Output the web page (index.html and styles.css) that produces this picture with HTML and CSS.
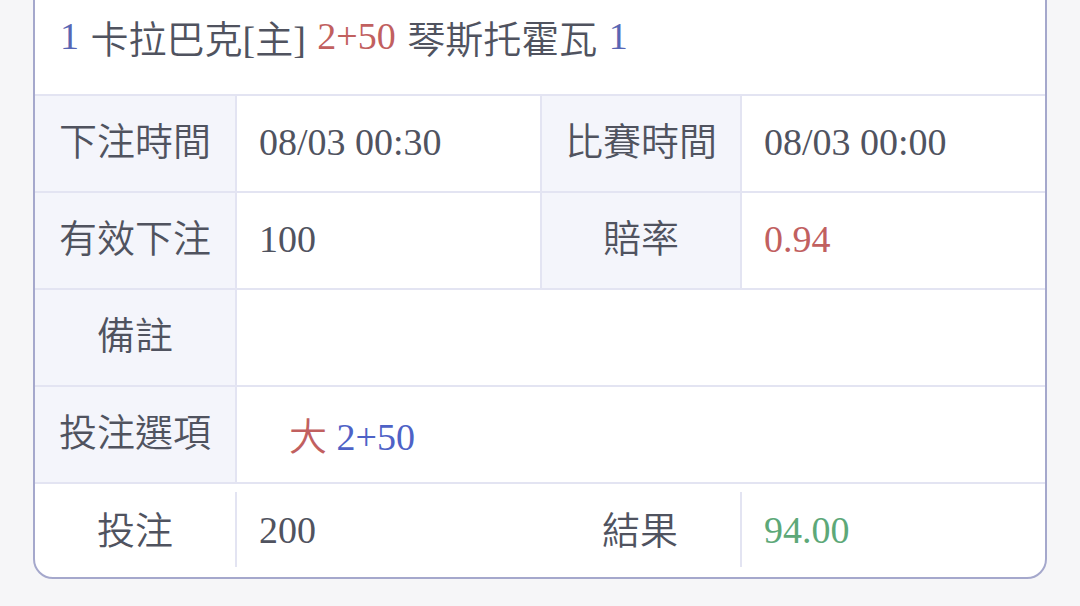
FILE: index.html
```html
<!DOCTYPE html>
<html lang="zh-Hant">
<head>
<meta charset="utf-8">
<title>注單</title>
<link rel="stylesheet" href="styles.css">
</head>
<body>
<div class="page">
  <div class="card">
    <div class="head">
      <span class="blue">1</span>&nbsp;卡拉巴克[主]&nbsp;<span class="red">2+50</span>&nbsp;琴斯托霍瓦&nbsp;<span class="blue">1</span>
    </div>
    <div class="row">
      <div class="lbl w1">下注時間</div>
      <div class="val w2">08/03 00:30</div>
      <div class="lbl w3">比賽時間</div>
      <div class="val w4 last">08/03 00:00</div>
    </div>
    <div class="row">
      <div class="lbl w1">有效下注</div>
      <div class="val w2">100</div>
      <div class="lbl w3">賠率</div>
      <div class="val w4 last red">0.94</div>
    </div>
    <div class="row">
      <div class="lbl w1">備註</div>
      <div class="val grow last"></div>
    </div>
    <div class="row">
      <div class="lbl w1">投注選項</div>
      <div class="val grow last"><span class="pick"><span class="red">大</span> <span class="blue2">2+50</span></span></div>
    </div>
    <div class="row foot">
      <div class="lbl w1 plain">投注</div>
      <div class="sep"></div>
      <div class="val w2 plain">200</div>
      <div class="lbl w3 plain">結果</div>
      <div class="sep"></div>
      <div class="val w4 plain last green">94.00</div>
    </div>
  </div>
</div>
</body>
</html>
```

FILE: styles.css
```css
html, body {
  margin: 0;
  padding: 0;
  background: #f6f6f8;
}
body {
  width: 1080px;
  height: 606px;
  overflow: hidden;
  font-family: "Liberation Serif", "Noto Sans CJK TC", serif;
  font-weight: 350;
  color: #50535f;
  font-size: 38px;
}
.page {
  padding: 0 33px;
}
.card {
  margin-top: -20px;
  background: #ffffff;
  border: 2px solid #a5a8cc;
  border-radius: 20px;
  overflow: hidden;
}
.head {
  height: 112px;
  display: flex;
  align-items: center;
  padding: 0 0 4px 25px;
  box-sizing: border-box;
  white-space: nowrap;
  word-spacing: 2px;
}
.blue { color: #5866b4; }
.blue2 { color: #4e62c6; }
.red { color: #c1605f; }
.green { color: #5da878; }
.row {
  display: flex;
  height: 97px;
  border-top: 2px solid #e3e4f2;
  box-sizing: border-box;
}
.row.foot {
  height: 95px;
  align-items: center;
}
.lbl, .val {
  display: flex;
  align-items: center;
  box-sizing: border-box;
  height: 100%;
  white-space: nowrap;
}
.lbl {
  justify-content: center;
  background: #f4f5fb;
  border-right: 2px solid #e3e4f2;
  padding-bottom: 10px;
}
.val {
  padding-left: 22px;
  padding-bottom: 3px;
  border-right: 2px solid #e3e4f2;
}
.w1 { width: 202px; }
.w2 { width: 305px; }
.w3 { width: 200px; }
.w4 { width: 303px; }
.grow { flex: 1; }
.last { border-right: none; }
.plain {
  background: transparent;
  border-right: none;
}
.foot .lbl { padding-bottom: 6px; }
.foot .val { padding-bottom: 2px; }
.foot .w1 { width: 200px; }
.foot .w2 { width: 303px; }
.foot .w3 { width: 200px; }
.sep {
  width: 2px;
  height: 75px;
  margin-top: -2px;
  background: #e3e4f2;
  flex: none;
}
.pick {
  margin-left: 30px;
}
```
